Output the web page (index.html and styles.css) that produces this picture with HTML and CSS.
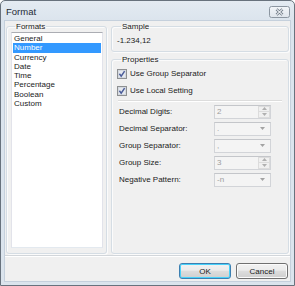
FILE: index.html
```html
<!DOCTYPE html>
<html>
<head>
<meta charset="utf-8">
<link rel="stylesheet" href="styles.css">
</head>
<body>
<div class="window">
  <div class="titlebar">
    <span class="title">Format</span>
    <span class="close">
      <svg width="21" height="12" viewBox="0 0 21 12">
        <defs>
          <linearGradient id="cg" x1="0" y1="0" x2="0" y2="1">
            <stop offset="0" stop-color="#f3f6f9"/>
            <stop offset="1" stop-color="#dfe5ec"/>
          </linearGradient>
        </defs>
        <rect x="0.5" y="0.5" width="20" height="11" rx="2" fill="url(#cg)" stroke="#8c96a1"/>
        <path d="M7.5 3.2 L13.5 8.8 M13.5 3.2 L7.5 8.8" stroke="#6f7a86" stroke-width="2.6" fill="none"/>
        <path d="M7.5 3.2 L13.5 8.8 M13.5 3.2 L7.5 8.8" stroke="#eef1f5" stroke-width="1.1" fill="none"/>
      </svg>
    </span>
  </div>
  <div class="client">
    <div class="main">
      <fieldset class="group formats">
        <legend>Formats</legend>
        <ul class="list">
          <li>General</li>
          <li class="sel">Number</li>
          <li>Currency</li>
          <li>Date</li>
          <li>Time</li>
          <li>Percentage</li>
          <li>Boolean</li>
          <li>Custom</li>
        </ul>
      </fieldset>
      <div class="right">
        <fieldset class="group sample">
          <legend>Sample</legend>
          <div class="sample-val">-1.234,12</div>
        </fieldset>
        <fieldset class="group props">
          <legend>Properties</legend>
          <div class="check">
            <svg class="cb" width="10" height="10" viewBox="0 0 10 10">
              <rect x="0.5" y="0.5" width="9" height="9" fill="#fcfcfc" stroke="#8e9092"/>
              <rect x="1.5" y="1.5" width="7" height="7" fill="#e6e9ee" stroke="#d4d9e0"/>
              <path d="M2.4 4.8 L4.2 7.2 L7.6 2.2" stroke="#4b5d9a" stroke-width="1.5" fill="none"/>
            </svg>
            <span>Use Group Separator</span>
          </div>
          <div class="check">
            <svg class="cb" width="10" height="10" viewBox="0 0 10 10">
              <rect x="0.5" y="0.5" width="9" height="9" fill="#fcfcfc" stroke="#8e9092"/>
              <rect x="1.5" y="1.5" width="7" height="7" fill="#e6e9ee" stroke="#d4d9e0"/>
              <path d="M2.4 4.8 L4.2 7.2 L7.6 2.2" stroke="#4b5d9a" stroke-width="1.5" fill="none"/>
            </svg>
            <span>Use Local Setting</span>
          </div>
          <div class="sep"></div>
          <div class="row">
            <span class="lbl">Decimal Digits:</span>
            <div class="field">
              <span class="val">2</span>
              <span class="spin">
                <span class="sb"><svg width="5" height="3" viewBox="0 0 5 3"><path d="M0 3 L2.5 0 L5 3 Z" fill="#b0b0b0"/></svg></span>
                <span class="sb"><svg width="5" height="3" viewBox="0 0 5 3"><path d="M0 0 L2.5 3 L5 0 Z" fill="#b0b0b0"/></svg></span>
              </span>
            </div>
          </div>
          <div class="row">
            <span class="lbl">Decimal Separator:</span>
            <div class="field">
              <span class="val">.</span>
              <svg class="arrow" width="5" height="3" viewBox="0 0 5 3"><path d="M0 0 L5 0 L2.5 3 Z" fill="#a3a3a3"/></svg>
            </div>
          </div>
          <div class="row">
            <span class="lbl">Group Separator:</span>
            <div class="field">
              <span class="val">,</span>
              <svg class="arrow" width="5" height="3" viewBox="0 0 5 3"><path d="M0 0 L5 0 L2.5 3 Z" fill="#a3a3a3"/></svg>
            </div>
          </div>
          <div class="row">
            <span class="lbl">Group Size:</span>
            <div class="field">
              <span class="val">3</span>
              <span class="spin">
                <span class="sb"><svg width="5" height="3" viewBox="0 0 5 3"><path d="M0 3 L2.5 0 L5 3 Z" fill="#b0b0b0"/></svg></span>
                <span class="sb"><svg width="5" height="3" viewBox="0 0 5 3"><path d="M0 0 L2.5 3 L5 0 Z" fill="#b0b0b0"/></svg></span>
              </span>
            </div>
          </div>
          <div class="row">
            <span class="lbl">Negative Pattern:</span>
            <div class="field">
              <span class="val">-n</span>
              <svg class="arrow" width="5" height="3" viewBox="0 0 5 3"><path d="M0 0 L5 0 L2.5 3 Z" fill="#a3a3a3"/></svg>
            </div>
          </div>
        </fieldset>
      </div>
    </div>
    <div class="footer">
      <span class="btn default">OK</span>
      <span class="btn">Cancel</span>
    </div>
  </div>
</div>
</body>
</html>
```

FILE: styles.css
```css
* { box-sizing: border-box; }
html, body { margin: 0; padding: 0; background: #ffffff; }
body {
  font-family: "Liberation Sans", Arial, sans-serif;
  font-size: 8px;
  color: #1b1b1b;
}
.window {
  width: 295px;
  height: 286px;
  border: 1px solid #68727d;
  border-radius: 5px 5px 0 0;
  background: linear-gradient(#e4ebf2, #dbe4ed 20px, #dbe4ed);
  display: flex;
  flex-direction: column;
}
.titlebar {
  height: 19px;
  display: flex;
  align-items: center;
  justify-content: space-between;
  padding: 0 4px 0 5px;
}
.title {
  font-size: 9.5px;
  color: #1e2a36;
  margin-top: 1px;
}
.close {
  display: flex;
  margin-top: 2px;
}
.client {
  margin: 0 3px 3px 3px;
  flex: 1;
  background: #f0f0f0;
  border: 1px solid #c5d0dc;
  display: flex;
  flex-direction: column;
}
.main {
  display: flex;
  gap: 4px;
  padding: 1px 1px 1px 1px;
  height: 234px;
}
.group {
  margin: 0;
  border: 1px solid #d5dde4;
  border-radius: 3px;
  box-shadow: inset 1px 1px 0 #fbfbfb, 1px 1px 0 #fbfbfb;
  min-width: 0;
}
.group legend {
  font-size: 8px;
  line-height: 9px;
  height: 9px;
  padding: 0 1px;
  margin-left: 4px;
  color: #1b1b1b;
}
.formats {
  width: 101px;
  padding: 1px 3px 4px 4px;
}
.list {
  list-style: none;
  margin: 0;
  padding: 1px 1px;
  height: 216px;
  background: #ffffff;
  border: 1px solid #abadb3;
  border-color: #abadb3 #e2e3ea #e3e9ef #e2e3ea;
}
.list li {
  height: 9.29px;
  line-height: 9.29px;
  padding-left: 1px;
  white-space: nowrap;
}
.list li.sel {
  background: #3399ff;
  color: #ffffff;
}
.right {
  flex: 1;
  display: flex;
  flex-direction: column;
  gap: 3px;
}
.sample {
  padding: 5px 5px 6px 5px;
}
.sample-val {
  line-height: 9px;
}
.props {
  flex: 1;
  padding: 1px 5px 0 5px;
}
.check {
  height: 17px;
  display: flex;
  align-items: center;
  gap: 3px;
}
.cb { display: block; flex: none; }
.sep {
  height: 2px;
  margin: 1px 1px 1px 1px;
  border-top: 1px solid #dcdcdc;
  border-bottom: 1px solid #ffffff;
}
.row {
  height: 17px;
  display: flex;
  align-items: center;
  padding-left: 2px;
}
.lbl {
  width: 95px;
  flex: none;
}
.field {
  width: 57px;
  height: 14px;
  border: 1px solid #d2d4d8;
  border-top-color: #c4c6ca;
  background: #f4f4f4;
  display: flex;
  align-items: center;
  justify-content: space-between;
  padding: 0 0 0 2px;
  color: #9c9c9c;
}
.val { line-height: 12px; }
.arrow { margin-right: 5px; }
.spin {
  display: flex;
  flex-direction: column;
  width: 12px;
  height: 12px;
}
.sb {
  flex: 1;
  display: flex;
  align-items: center;
  justify-content: center;
  border: 1px solid #dcdcdc;
  background: #f0f0f0;
}
.sb + .sb { border-top: none; }
.footer {
  border-top: 1px solid #d2d6da;
  flex: 1;
  display: flex;
  justify-content: flex-end;
  align-items: flex-start;
  gap: 5px;
  padding: 7px 2px 0 0;
  box-shadow: inset 0 1px 0 #ffffff;
}
.btn {
  width: 52px;
  height: 16px;
  border: 1px solid #707070;
  border-radius: 3px;
  background: linear-gradient(#f2f2f2, #ebebeb 45%, #dddddd 50%, #cfcfcf);
  box-shadow: inset 0 0 0 1px #fbfbfb;
  display: flex;
  align-items: center;
  justify-content: center;
  color: #1b1b1b;
}
.btn.default {
  border-color: #3c7fb1;
  box-shadow: inset 0 0 0 1px #48d2fb;
}
```
